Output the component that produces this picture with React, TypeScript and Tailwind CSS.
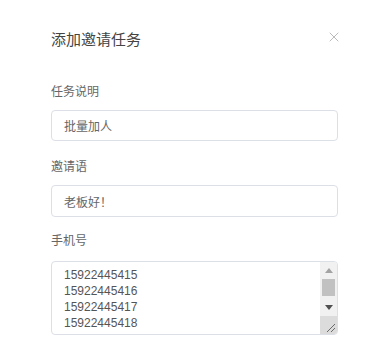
import { X } from 'lucide-react'

const phones = ['15922445415', '15922445416', '15922445417', '15922445418']

function FakeScrollbar() {
  return (
    <div className="flex w-[17px] shrink-0 flex-col bg-[#f1f1f1]">
      <div className="flex h-[17px] items-center justify-center">
        <svg width="8" height="5" viewBox="0 0 8 5">
          <path d="M0 5 L4 0 L8 5 Z" fill="#a3a3a3" />
        </svg>
      </div>
      <div className="h-[20px] px-[2px]">
        <div className="h-[17px] bg-[#c1c1c1]" />
      </div>
      <div className="flex h-[17px] items-center justify-center">
        <svg width="8" height="5" viewBox="0 0 8 5">
          <path d="M0 0 L8 0 L4 5 Z" fill="#505050" />
        </svg>
      </div>
      <div className="flex h-[18px] items-end justify-end bg-[#dcdcdc] p-[1px]">
        <svg width="10" height="10" viewBox="0 0 10 10">
          <path d="M9 1 L1 9 M9 5 L5 9" stroke="#6b6b6b" strokeWidth="1" />
        </svg>
      </div>
    </div>
  )
}

export default function App() {
  return (
    <div
      className="h-[362px] w-[392px] bg-white pl-[51px] pr-[54px] pt-[28px] text-[#666]"
      style={{ fontFamily: '"Liberation Sans", "Noto Sans CJK SC", sans-serif' }}
    >
      <div className="flex h-[24px] items-start justify-between">
        <h1 className="text-[15px] leading-[24px] text-[#444]">添加邀请任务</h1>
        <button className="mr-[-4px] mt-[1px] text-[#999]">
          <X size={16} strokeWidth={1} />
        </button>
      </div>

      <div className="mt-[30px] text-[12px] leading-[20px]">任务说明</div>
      <input
        readOnly
        value="批量加人"
        className="mt-[8px] block h-[31px] w-full rounded-[4px] border border-[#dcdfe6] px-[12px] text-[12px] text-[#666] outline-none"
      />

      <div className="mt-[16px] text-[12px] leading-[20px]">邀请语</div>
      <input
        readOnly
        value="老板好！"
        className="mt-[8px] block h-[32px] w-full rounded-[4px] border border-[#dcdfe6] px-[12px] text-[12px] text-[#666] outline-none"
      />

      <div className="mt-[14px] text-[12px] leading-[20px]">手机号</div>
      <div className="mt-[10px] flex h-[74px] w-full overflow-hidden rounded-[4px] border border-[#dcdfe6]">
        <textarea
          readOnly
          value={phones.join('\n')}
          className="h-full flex-1 resize-none overflow-hidden px-[12px] pt-[5px] text-[12px] leading-[16px] text-[#555] outline-none"
        />
        <FakeScrollbar />
      </div>
    </div>
  )
}
